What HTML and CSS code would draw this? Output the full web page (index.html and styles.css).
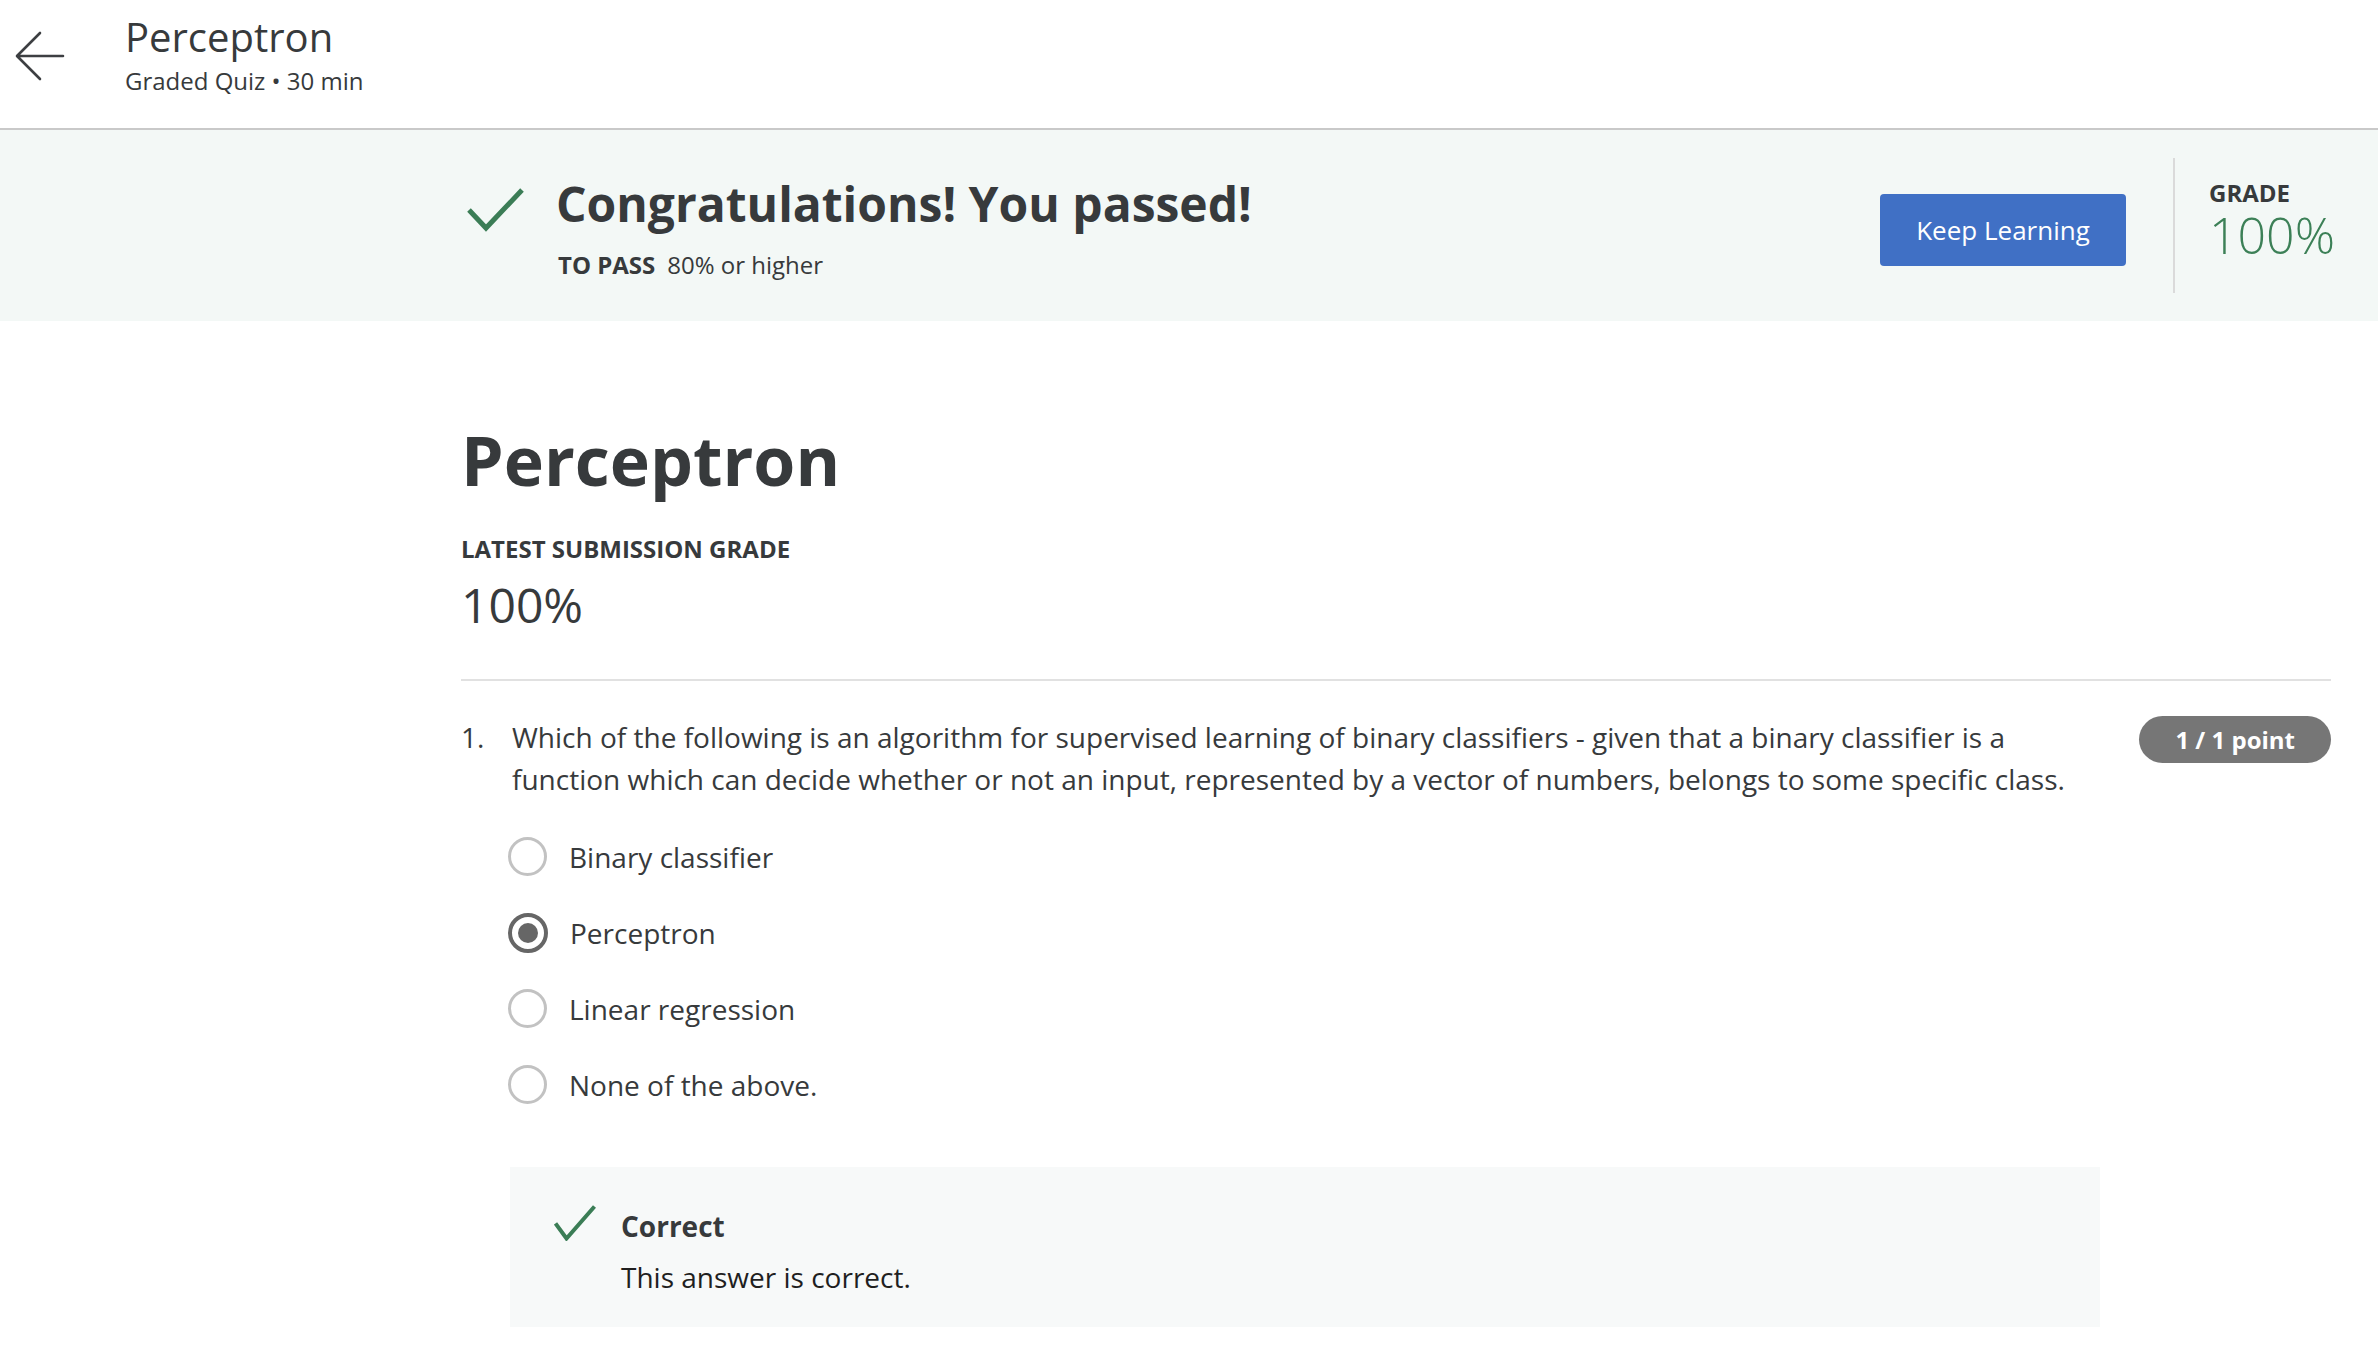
FILE: index.html
```html
<!DOCTYPE html>
<html lang="en">
<head>
<meta charset="utf-8">
<title>Perceptron</title>
<link rel="stylesheet" href="styles.css">
</head>
<body>
<header class="topbar">
  <button class="back" aria-label="Back">
    <svg width="52" height="52" viewBox="0 0 52 52" fill="none" stroke="#3d3f42" stroke-width="2.6" stroke-linecap="round" stroke-linejoin="round"><path d="M49 26H4M26 3L3 26L26 49"/></svg>
  </button>
  <div class="titles">
    <div class="title">Perceptron</div>
    <div class="subtitle">Graded Quiz • 30 min</div>
  </div>
</header>

<section class="banner">
  <div class="banner-main">
    <svg class="banner-check" width="59" height="45" viewBox="0 0 59 45" fill="none" stroke="#3b7d56" stroke-width="5"><path d="M3 23L20 41L56 3"/></svg>
    <div class="banner-text">
      <h2 class="congrats">Congratulations! You passed!</h2>
      <div class="topass"><span class="topass-label">TO PASS</span><span class="topass-value">80% or higher</span></div>
    </div>
  </div>
  <button class="keep">Keep Learning</button>
  <div class="vdivider"></div>
  <div class="grade">
    <div class="grade-label">GRADE</div>
    <div class="grade-value">100%</div>
  </div>
</section>

<main class="content">
  <h1 class="quiz-title">Perceptron</h1>
  <div class="latest-label">LATEST SUBMISSION GRADE</div>
  <div class="latest-value">100%</div>
  <hr class="sep">

  <div class="question">
    <div class="qnum">1.</div>
    <div class="qbody">
      <p class="qtext">Which of the following is an algorithm for supervised learning of binary classifiers - given that a binary classifier is a function which can decide whether or not an input, represented by a vector of numbers, belongs to some specific class.</p>
      <ul class="options">
        <li class="option"><span class="radio"></span><span class="opt-label">Binary classifier</span></li>
        <li class="option"><span class="radio checked"></span><span class="opt-label">Perceptron</span></li>
        <li class="option"><span class="radio"></span><span class="opt-label">Linear regression</span></li>
        <li class="option"><span class="radio"></span><span class="opt-label">None of the above.</span></li>
      </ul>
      <div class="feedback">
        <svg class="fb-check" width="42" height="36" viewBox="0 0 42 36" fill="none" stroke="#3b7d56" stroke-width="4"><path d="M1.5 18.5L12.5 33.5L40.5 1.5"/></svg>
        <div class="fb-text">
          <div class="fb-title">Correct</div>
          <div class="fb-msg">This answer is correct.</div>
        </div>
      </div>
    </div>
    <div class="badge">1 / 1 point</div>
  </div>
</main>
</body>
</html>
```

FILE: styles.css
```css
* { box-sizing: border-box; }
html, body { margin: 0; padding: 0; }
body {
  font-family: "Open Sans", "Liberation Sans", sans-serif;
  color: #373a3c;
  background: #fff;
  width: 2378px;
  overflow: hidden;
}

/* Header */
.topbar {
  display: flex;
  align-items: flex-start;
  height: 130px;
  border-bottom: 2px solid #c9c9c9;
}
.back {
  margin: 30px 0 0 14px;
  padding: 0;
  border: 0;
  background: none;
  width: 52px;
  height: 52px;
  display: block;
}
.back svg { display: block; }
.titles {
  margin-left: 59px;
  padding-top: 13px;
}
.title {
  font-size: 40px;
  line-height: 48px;
  font-weight: 400;
}
.subtitle {
  font-size: 24px;
  line-height: 32px;
  margin-top: 4px;
}

/* Banner */
.banner {
  display: flex;
  align-items: flex-start;
  height: 191px;
  padding: 0 43px 0 461px;
  background: #f3f8f6;
}
.banner-main {
  flex: 1;
  display: flex;
  align-items: flex-start;
}
.banner-check {
  display: block;
  margin: 57px 0 0 5px;
  flex: none;
}
.banner-text {
  margin: 46px 0 0 31px;
}
.congrats {
  margin: 0;
  font-size: 48px;
  line-height: 56px;
  font-weight: 700;
  color: #373a3c;
}
.topass {
  margin: 19px 0 0 2px;
  font-size: 24px;
  line-height: 28px;
}
.topass-label { font-weight: 700; }
.topass-value { margin-left: 12px; }

.keep {
  margin-top: 64px;
  width: 246px;
  height: 72px;
  border: 0;
  border-radius: 4px;
  background: #4070c5;
  color: #fff;
  font-family: "Open Sans", "Liberation Sans", sans-serif;
  font-size: 26px;
  font-weight: 400;
  padding: 0;
}
.vdivider {
  width: 2px;
  height: 135px;
  margin: 28px 0 0 47px;
  background: #dadada;
}
.grade {
  margin: 49px 0 0 34px;
}
.grade-label {
  font-size: 24px;
  line-height: 28px;
  font-weight: 700;
}
.grade-value {
  font-size: 50px;
  line-height: 56px;
  font-weight: 300;
  color: #3c8057;
}

/* Content */
.content {
  padding: 0 47px 0 461px;
}
.quiz-title {
  margin: 99px 0 0;
  font-size: 68px;
  line-height: 80px;
  font-weight: 700;
}
.latest-label {
  margin-top: 34px;
  font-size: 24px;
  line-height: 30px;
  font-weight: 700;
}
.latest-value {
  margin-top: 13px;
  font-size: 48px;
  line-height: 56px;
  font-weight: 400;
}
.sep {
  margin: 46px 0 0;
  border: 0;
  height: 2px;
  background: #e1e1e1;
}

.question {
  display: flex;
  align-items: flex-start;
  padding-top: 34.5px;
}
.qnum {
  width: 51px;
  flex: none;
  font-size: 28px;
  line-height: 42px;
}
.qbody {
  width: 1588px;
  flex: none;
}
.qtext {
  margin: 0;
  max-width: 1575px;
  font-size: 28px;
  line-height: 42px;
}
.options {
  list-style: none;
  margin: 19px 0 0 -4px;
  padding: 0;
}
.option {
  display: flex;
  align-items: center;
  height: 76px;
}
.radio {
  width: 39px;
  height: 39px;
  border-radius: 50%;
  border: 3px solid #c2c2c2;
  flex: none;
  display: flex;
  align-items: center;
  justify-content: center;
}
.radio.checked {
  width: 40px;
  height: 40px;
  border: 4px solid #666;
}
.radio.checked::after {
  content: "";
  width: 20px;
  height: 20px;
  border-radius: 50%;
  background: #666;
}
.opt-label {
  margin-left: 22px;
  font-size: 28px;
  line-height: 36px;
}

.feedback {
  margin: 44.5px 0 0 -2px;
  background: #f7f9f9;
  display: flex;
  align-items: flex-start;
  padding: 37.5px 44px 32px 44px;
}
.fb-check {
  display: block;
  flex: none;
}
.fb-text {
  margin: 3px 0 0 25px;
}
.fb-title {
  font-size: 28px;
  line-height: 36px;
  font-weight: 700;
}
.fb-msg {
  margin-top: 15px;
  font-size: 28px;
  line-height: 36px;
  color: #1f1f1f;
}

.badge {
  margin: 0.5px 0 0 auto;
  height: 47px;
  line-height: 47px;
  padding: 0 36px;
  border-radius: 24px;
  background: #767676;
  color: #fff;
  font-size: 24px;
  font-weight: 700;
  white-space: nowrap;
}
```
